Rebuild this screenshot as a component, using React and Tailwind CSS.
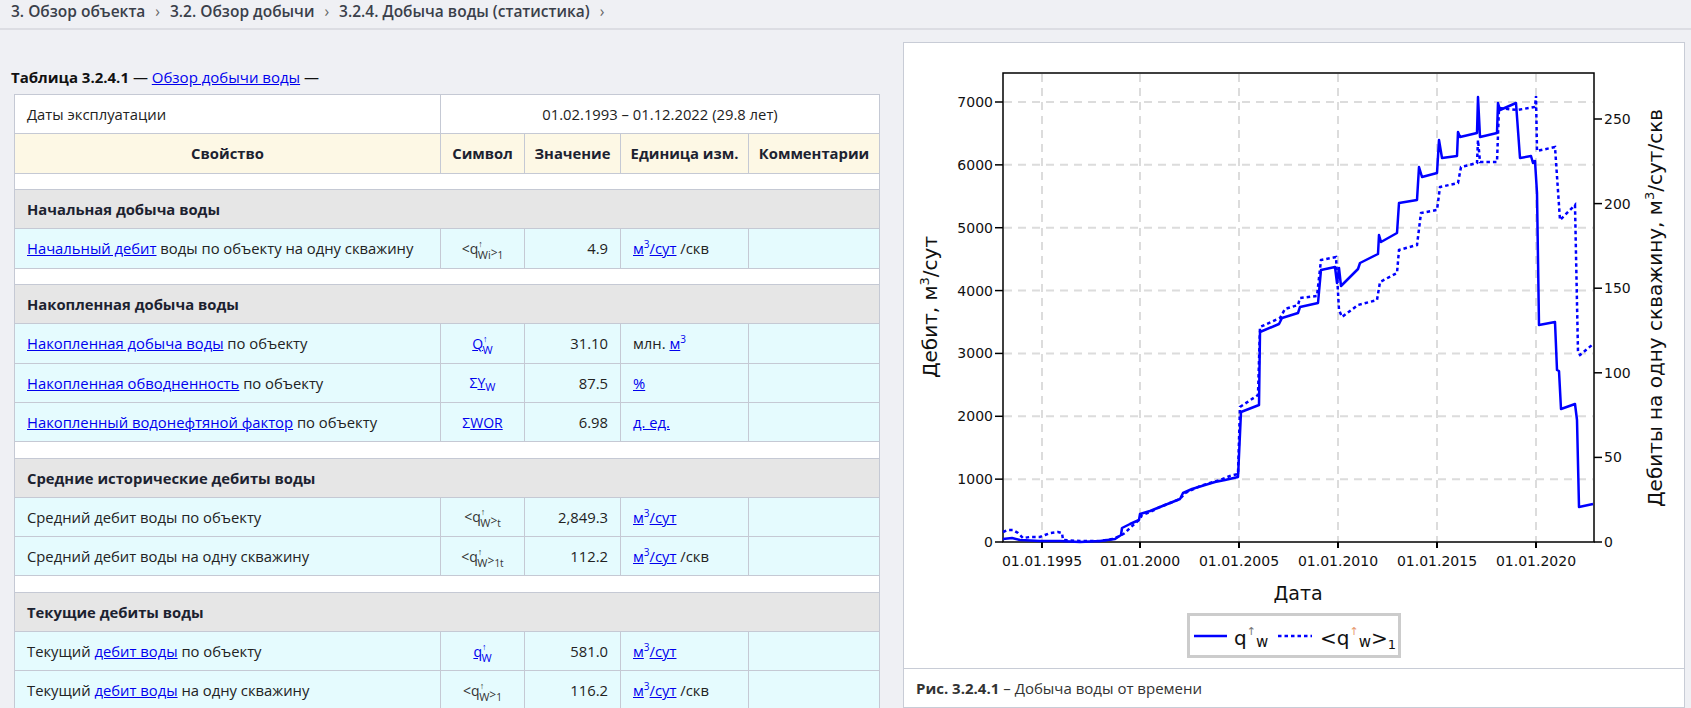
import React from "react";

const LINK = "text-[#0000ee] underline";

const S = [[1003,539],[1012,538],[1020,540],[1040,541],[1060,541],[1080,542],[1100,541],[1115,539],[1121,535],[1122,528],[1130,524],[1139,520],[1140,514],[1150,511],[1160,507],[1170,503],[1180,499],[1183,493],[1192,489],[1205,485],[1215,482],[1225,480],[1238,477],[1241,412],[1259,405],[1260,332],[1279,324],[1282,318],[1298,313],[1300,307],[1318,303],[1321,270],[1335,267],[1337,283],[1339,268],[1341,286],[1358,269],[1360,263],[1378,254],[1379,235],[1381,242],[1397,233],[1399,203],[1417,200],[1419,167],[1422,177],[1437,173],[1439,140],[1442,158],[1457,156],[1458,132],[1460,137],[1477,133],[1478,97],[1480,137],[1497,133],[1498,103],[1500,110],[1516,103],[1520,158],[1531,156],[1533,163],[1535,161],[1537,193],[1539,325],[1555,322],[1557,370],[1559,371],[1561,409],[1575,404],[1577,420],[1579,507],[1593,504]];

const D = [[1003,532],[1008,530],[1013,530],[1018,533],[1023,538],[1030,537],[1040,537],[1045,535],[1050,533],[1058,532],[1062,533],[1063,540],[1080,541],[1100,541],[1112,539],[1120,536],[1125,533],[1130,528],[1140,519],[1142,515],[1150,512],[1160,507],[1170,503],[1180,499],[1185,493],[1200,486],[1210,483],[1220,480],[1230,476],[1238,474],[1240,407],[1258,395],[1260,327],[1280,318],[1285,309],[1298,305],[1300,298],[1317,296],[1321,260],[1336,257],[1339,310],[1342,317],[1358,305],[1377,300],[1380,282],[1397,273],[1399,250],[1417,245],[1421,213],[1437,210],[1440,187],[1458,183],[1461,167],[1477,163],[1478,140],[1480,162],[1497,162],[1499,108],[1517,110],[1535,107],[1536,96],[1537,151],[1555,147],[1560,220],[1575,205],[1578,352],[1580,355],[1592,345]];

const pts = (a) => a.map((p) => p.join(",")).join(" ");

const XT = [[1042,"01.01.1995"],[1140,"01.01.2000"],[1239,"01.01.2005"],[1338,"01.01.2010"],[1437,"01.01.2015"],[1536,"01.01.2020"]];
const YL = [0,1000,2000,3000,4000,5000,6000,7000].map((v) => [542 - v * 0.062857, v]);
const YR = [0,50,100,150,200,250].map((v) => [542 - v * 1.692, v]);

function Arr() {
  return <span className="relative top-[-7px] text-[9px] leading-none">↑</span>;
}
function Sub({ children }) {
  return <span className="relative top-[5px] text-[11px] leading-none -ml-[5px]">{children}</span>;
}
function Gt() {
  return <span className="relative top-[3px] text-[12px] leading-none">&gt;</span>;
}
function Idx({ children }) {
  return <span className="relative top-[5px] text-[10px] leading-none">{children}</span>;
}

function M3() {
  return (
    <>
      <span className={LINK}>м</span>
      <span className="relative top-[-6px] text-[10px] leading-none text-[#0000ee]">3</span>
      <span className={LINK}>/сут</span>
    </>
  );
}

function GroupRow({ title }) {
  return (
    <>
      <tr className="h-[16.4px] bg-white">
        <td colSpan={5} className="border border-[#c5c9d4] p-0"></td>
      </tr>
      <tr className="h-[39.3px] bg-[#e6e6e6]">
        <td colSpan={5} className="border border-[#c5c9d4] px-[12px] font-bold text-[#1c2230]">
          {title}
        </td>
      </tr>
    </>
  );
}

function DataRow({ name, sym, val, unit }) {
  return (
    <tr className="h-[39.3px] bg-[#e5fbfe]">
      <td className="border border-[#c5c9d4] px-[12px]">{name}</td>
      <td className="border border-[#c5c9d4] px-[4px] text-center text-[14px] text-[#333]">{sym}</td>
      <td className="border border-[#c5c9d4] px-[12px] text-right">{val}</td>
      <td className="border border-[#c5c9d4] px-[12px]">{unit}</td>
      <td className="border border-[#c5c9d4] px-[12px]"></td>
    </tr>
  );
}

function Chart() {
  return (
    <svg width="780" height="625" viewBox="904 43 780 625" className="block" style={{ fontFamily: "'DejaVu Sans', sans-serif" }}>
      {XT.map(([x]) => (
        <line key={"gx" + x} x1={x} y1={74} x2={x} y2={541} stroke="#dcdcdc" strokeWidth="2" strokeDasharray="8 6" />
      ))}
      {YL.slice(1).map(([y]) => (
        <line key={"gy" + y} x1={1004} y1={y} x2={1593} y2={y} stroke="#dcdcdc" strokeWidth="2" strokeDasharray="8 6" />
      ))}
      <rect x="1003" y="73" width="591" height="469" fill="none" stroke="#000" strokeWidth="1.5" />
      {YL.map(([y, v]) => (
        <g key={"yl" + v}>
          <line x1={995} y1={y} x2={1003} y2={y} stroke="#000" strokeWidth="1.5" />
          <text x={993} y={y + 5} textAnchor="end" fontSize="14" fill="#111">{v}</text>
        </g>
      ))}
      {YR.map(([y, v]) => (
        <g key={"yr" + v}>
          <line x1={1594} y1={y} x2={1602} y2={y} stroke="#000" strokeWidth="1.5" />
          <text x={1604} y={y + 5} textAnchor="start" fontSize="14" fill="#111">{v}</text>
        </g>
      ))}
      {XT.map(([x, l]) => (
        <g key={"xt" + x}>
          <line x1={x} y1={542} x2={x} y2={548} stroke="#000" strokeWidth="2" />
          <text x={x} y={566} textAnchor="middle" fontSize="14" fill="#111">{l}</text>
        </g>
      ))}
      <text transform="translate(937,307) rotate(-90)" textAnchor="middle" fontSize="20" fill="#111">
        Дебит, м<tspan dy="-8" fontSize="13">3</tspan><tspan dy="8">/сут</tspan>
      </text>
      <text transform="translate(1662,308) rotate(-90)" textAnchor="middle" fontSize="20" fill="#111">
        Дебиты на одну скважину, м<tspan dy="-8" fontSize="13">3</tspan><tspan dy="8">/сут/скв</tspan>
      </text>
      <text x="1298" y="600" textAnchor="middle" fontSize="19" fill="#111">Дата</text>

      <polyline points={pts(D)} fill="none" stroke="#0000ff" strokeWidth="2.5" strokeDasharray="3.5 3" />
      <polyline points={pts(S)} fill="none" stroke="#0000ff" strokeWidth="2.5" strokeLinejoin="round" />

      <rect x="1188.5" y="614.5" width="211" height="42" fill="#fff" stroke="#cccccc" strokeWidth="3" />
      <line x1="1194" y1="636" x2="1227" y2="636" stroke="#0000ff" strokeWidth="2.5" />
      <text x="1234" y="645" fontSize="20" fill="#111">
        q<tspan dy="-10" fontSize="11" fill="#777">↑</tspan><tspan dy="12" fontSize="15">w</tspan>
      </text>
      <line x1="1278" y1="636" x2="1312" y2="636" stroke="#0000ff" strokeWidth="2.5" strokeDasharray="3.5 3" />
      <text x="1320" y="645" fontSize="20" fill="#111">
        &lt;q<tspan dy="-10" fontSize="11" fill="#e89a70">↑</tspan><tspan dy="12" fontSize="15">w</tspan><tspan dy="-2" fontSize="20">&gt;</tspan><tspan dy="4" fontSize="13">1</tspan>
      </text>
    </svg>
  );
}

export default function App() {
  return (
    <div className="min-h-[708px] w-[1691px] bg-[#eff0f4] text-[14.8px] text-[#222] font-['Open_Sans',sans-serif]">
      <div className="h-[30px] border-b-2 border-[#dcdde3] pl-[11px] flex items-start text-[15.5px] font-semibold text-[#3a3f4a]">
        <span>3. Обзор объекта</span>
        <span className="mx-[10px] text-[#666] font-normal">›</span>
        <span>3.2. Обзор добычи</span>
        <span className="mx-[10px] text-[#666] font-normal">›</span>
        <span>3.2.4. Добыча воды (статистика)</span>
        <span className="mx-[10px] text-[#666] font-normal">›</span>
      </div>

      <div className="flex items-start pl-[14px] pr-[6px] pt-[12px] gap-[24px]">
        <div className="w-[865px] shrink-0 pt-[25px]">
          <div className="h-[20px] leading-[20px] -ml-[3px] mb-[7px] text-[15px] text-[#111]">
            <span className="font-bold">Таблица 3.2.4.1</span> — <span className={LINK}>Обзор добычи воды</span> —
          </div>
          <table className="w-[865px] table-fixed border-collapse">
            <colgroup>
              <col className="w-[426px]" />
              <col className="w-[84px]" />
              <col className="w-[96px]" />
              <col className="w-[128px]" />
              <col className="w-[131px]" />
            </colgroup>
            <tbody>
              <tr className="h-[39.3px] bg-white">
                <td className="border border-[#c5c9d4] px-[12px]">Даты эксплуатации</td>
                <td colSpan={4} className="border border-[#c5c9d4] px-[12px] text-center">01.02.1993 – 01.12.2022 (29.8 лет)</td>
              </tr>
              <tr className="h-[39.3px] bg-[#fdf8e5] font-bold text-[#1c2230]">
                <td className="border border-[#c5c9d4] text-center">Свойство</td>
                <td className="border border-[#c5c9d4] text-center">Символ</td>
                <td className="border border-[#c5c9d4] text-center">Значение</td>
                <td className="border border-[#c5c9d4] text-center">Единица изм.</td>
                <td className="border border-[#c5c9d4] text-center">Комментарии</td>
              </tr>

              <GroupRow title="Начальная добыча воды" />
              <DataRow
                name={<><span className={LINK}>Начальный дебит</span> воды по объекту на одну скважину</>}
                sym={<span>&lt;q<Arr /><Sub>Wi</Sub><Gt /><Idx>1</Idx></span>}
                val="4.9"
                unit={<><M3 /> /скв</>}
              />

              <GroupRow title="Накопленная добыча воды" />
              <DataRow
                name={<><span className={LINK}>Накопленная добыча воды</span> по объекту</>}
                sym={<span className="text-[#0000ee]"><span className="underline">Q</span><Arr /><Sub>W</Sub></span>}
                val="31.10"
                unit={<>млн. <span className={LINK}>м</span><span className="relative top-[-6px] text-[10px] leading-none text-[#0000ee]">3</span></>}
              />
              <DataRow
                name={<><span className={LINK}>Накопленная обводненность</span> по объекту</>}
                sym={<span className="text-[#0000ee]">Σ<span className="underline">Y</span><span className="relative top-[3px] text-[11px] leading-none">W</span></span>}
                val="87.5"
                unit={<span className={LINK}>%</span>}
              />
              <DataRow
                name={<><span className={LINK}>Накопленный водонефтяной фактор</span> по объекту</>}
                sym={<span className="text-[#0000ee]">Σ<span className="underline">WOR</span></span>}
                val="6.98"
                unit={<span className={LINK}>д. ед.</span>}
              />

              <GroupRow title="Средние исторические дебиты воды" />
              <DataRow
                name="Средний дебит воды по объекту"
                sym={<span>&lt;q<Arr /><Sub>W</Sub><Gt /><Idx>t</Idx></span>}
                val="2,849.3"
                unit={<M3 />}
              />
              <DataRow
                name="Средний дебит воды на одну скважину"
                sym={<span>&lt;q<Arr /><Sub>W</Sub><Gt /><Idx>1t</Idx></span>}
                val="112.2"
                unit={<><M3 /> /скв</>}
              />

              <GroupRow title="Текущие дебиты воды" />
              <DataRow
                name={<>Текущий <span className={LINK}>дебит воды</span> по объекту</>}
                sym={<span className="text-[#0000ee]"><span className="underline">q</span><Arr /><Sub>W</Sub></span>}
                val="581.0"
                unit={<M3 />}
              />
              <DataRow
                name={<>Текущий <span className={LINK}>дебит воды</span> на одну скважину</>}
                sym={<span>&lt;q<Arr /><Sub>W</Sub><Gt /><Idx>1</Idx></span>}
                val="116.2"
                unit={<><M3 /> /скв</>}
              />
            </tbody>
          </table>
        </div>

        <div className="w-[782px] shrink-0 border border-[#c8ccd6] bg-white">
          <Chart />
          <div className="h-[39px] border-t border-[#c8ccd6] px-[12px] flex items-center text-[15px] text-[#333]">
            <span className="font-bold mr-[4px]">Рис. 3.2.4.1</span> – Добыча воды от времени
          </div>
        </div>
      </div>
    </div>
  );
}
